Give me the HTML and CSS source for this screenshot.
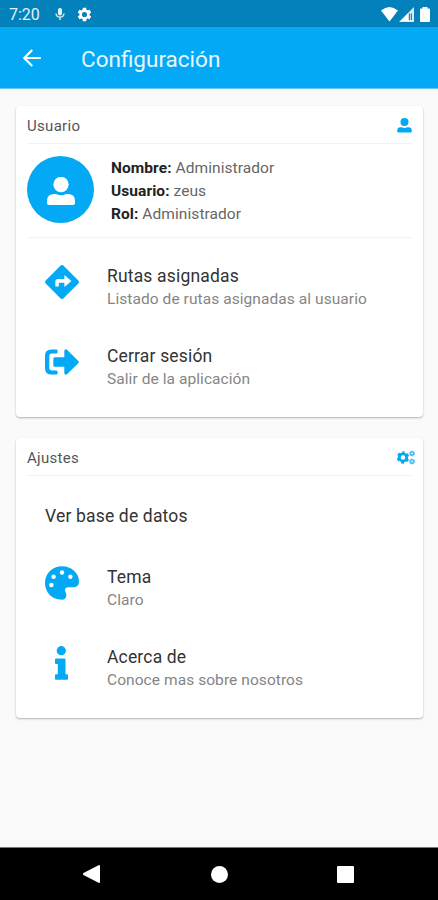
FILE: index.html
```html
<!DOCTYPE html>
<html lang="es">
<head>
<meta charset="utf-8">
<title>Configuración</title>
<link rel="stylesheet" href="styles.css">
</head>
<body>
<div class="status">
  <span class="clock">7:20</span>
  <svg class="mic" width="10" height="14" viewBox="0 0 10 14"><rect x="3" y="1" width="4" height="7.500" rx="2" fill="#e2f1f8"/><path d="M1 6.500c.4 4.700 7.600 4.700 8 0M5 10v3" fill="none" stroke="#c9e5f1" stroke-width="1.500"/></svg>
  <svg class="cog" width="17" height="17" viewBox="0 0 24 24"><path fill="#fff" d="M19.140 12.940c.04-.3.060-.61.060-.94s-.02-.64-.07-.94l2.030-1.580a.49.49 0 0 0 .12-.61l-1.920-3.320a.49.49 0 0 0-.59-.22l-2.390.96c-.5-.38-1.030-.7-1.620-.94L14.400 2.810a.48.48 0 0 0-.48-.41h-3.840a.47.47 0 0 0-.47.41l-.36 2.540c-.59.24-1.130.57-1.620.94l-2.390-.96a.48.48 0 0 0-.59.22L2.740 8.870a.47.47 0 0 0 .12.61l2.030 1.580c-.05.3-.09.63-.09.94s.02.64.07.94l-2.030 1.580a.49.49 0 0 0-.12.61l1.920 3.320c.12.22.37.29.59.22l2.390-.96c.5.38 1.030.7 1.620.94l.36 2.540c.05.24.24.41.48.41h3.840c.24 0 .44-.17.47-.41l.36-2.540c.59-.24 1.130-.56 1.620-.94l2.390.96c.22.080.47 0 .59-.22l1.920-3.320a.47.47 0 0 0-.12-.61zM12 15.600a3.600 3.600 0 1 1 0-7.200 3.600 3.600 0 0 1 0 7.200z"/></svg>
  <span class="spacer"></span>
  <svg class="wifi" width="17" height="15" viewBox="0 0 17 15"><path fill="#fff" d="M0 3.500Q8.500-3.500 17 3.500L8.500 14.500z"/></svg>
  <svg class="signal" width="15" height="15" viewBox="0 0 15 15"><path fill="#d6ebf5" d="M0 15 15 0v15z"/><path fill="#fff" d="M1.500 14 9.500 6v8z"/><path fill="#2b83ae" d="M9.800 6.500h3.200V13H9.800z"/><path fill="#b9dceb" d="M11.100 6h.9v7h-.9z"/></svg>
  <svg width="10" height="15" viewBox="0 0 10 16" preserveAspectRatio="none"><path fill="#fff" d="M2.500 1.500V0h5v1.500H9q1 0 1 1V15q0 1-1 1H1q-1 0-1-1V2.500q0-1 1-1z"/></svg>
</div>
<header class="appbar">
  <svg width="18" height="18" viewBox="0 0 18 18"><path d="M17.800 9H1.800M9.200 1 1.300 9l7.900 8" fill="none" stroke="#fff" stroke-width="2.200"/></svg>
  <h1>Configuración</h1>
</header>
<main>
  <section class="card user">
    <div class="head"><h2>Usuario</h2>
      <svg width="15" height="15" viewBox="0 0 15 15"><circle cx="7.500" cy="4" r="4"/><path d="M3.500 9.300h1.300q2.700 1.400 5.400 0h1.300q3.300 0 3.300 3.400v.6q0 1.200-1.200 1.200H1.400q-1.200 0-1.200-1.200v-.6q0-3.400 3.300-3.400z"/></svg>
    </div>
    <div class="profile">
      <div class="avatar"><svg width="28" height="28" viewBox="0 0 28 28"><circle cx="14" cy="7.500" r="7.700"/><path d="M7 17h2q5 2.500 10 0h2q7 0 7 7v2q0 2-2 2H2q-2 0-2-2v-2q0-7 7-7z"/></svg></div>
      <div class="info">
        <p><b>Nombre:</b> Administrador</p>
        <p><b>Usuario:</b> zeus</p>
        <p><b>Rol:</b> Administrador</p>
      </div>
    </div>
    <div class="row">
      <svg viewBox="0 0 34 34"><path d="M15.400.7q1.600-1.400 3.200 0l14.700 14.700q1.400 1.600 0 3.200L18.600 33.300q-1.600 1.400-3.200 0L.7 18.600q-1.400-1.600 0-3.200z"/><path fill="#fff" d="M10.400 21.500v-5q0-2.600 2.600-2.600h6.400v-4l7 6.100-7 6.100v-4.300h-5.600v3.700z"/></svg>
      <div><h3>Rutas asignadas</h3><p>Listado de rutas asignadas al usuario</p></div>
    </div>
    <div class="row">
      <svg viewBox="0 0 34 34"><path d="M12.500 5.400v2.200q0 1-1 1H7Q4.300 8.600 4.300 11.300v11.400q0 2.700 2.700 2.700h4.500q1 0 1 1v2.200q0 1-1 1h-5Q0 29.600 0 23.200V10.800Q0 4.400 6.500 4.400h5q1 0 1 1z"/><path d="M33.300 18.200 22 29.200q-2.500 1.400-2.700-1.200v-6.200H10q-1.700 0-1.700-1.600v-6.400q0-1.600 1.700-1.600h9.300V6q.2-2.600 2.700-1.200l11.300 11.100q1 1.100 0 2.300z"/></svg>
      <div><h3>Cerrar sesión</h3><p>Salir de la aplicación</p></div>
    </div>
  </section>
  <section class="card settings">
    <div class="head"><h2>Ajustes</h2>
      <svg class="cogs" width="18" height="15" viewBox="0 0 18 15"><circle cx="6" cy="7.500" r="3.700" fill="none" stroke="#03a9f4" stroke-width="2.800"/><circle cx="6" cy="7.500" r="5.300" fill="none" stroke="#03a9f4" stroke-width="1.800" stroke-dasharray="3 2.550" stroke-dashoffset="1.500" transform="rotate(-90 6 7.500)"/><g fill="none" stroke="#5fbdf0"><circle cx="15" cy="3.500" r="1.700" stroke-width="1.800"/><circle cx="15" cy="3.500" r="2.600" stroke-width="1" stroke-dasharray="1.360"/><circle cx="15" cy="11.500" r="1.700" stroke-width="1.800"/><circle cx="15" cy="11.500" r="2.600" stroke-width="1" stroke-dasharray="1.360"/></g></svg>
    </div>
    <div class="single"><h3>Ver base de datos</h3></div>
    <div class="row">
      <svg viewBox="0 0 34 34"><path d="M17 .3C26.500.3 34 7 34 15.500q0 5.500-5.500 5.700h-5.200q-3.300.2-3.300 3 0 1 .7 2.300 1 2 .4 4-.8 3.200-4.100 3.200C7 33.700 0 26.500 0 17S7.500.3 17 .3z"/><g fill="#fff"><circle cx="6.400" cy="19" r="2.200"/><circle cx="8.600" cy="10.800" r="2.200"/><circle cx="17" cy="6.500" r="2.200"/><circle cx="25.400" cy="10.800" r="2.200"/></g></svg>
      <div><h3>Tema</h3><p>Claro</p></div>
    </div>
    <div class="row">
      <svg viewBox="0 0 34 34"><circle cx="16.300" cy="4.700" r="4.600"/><path d="M11 12.500h8.500q1 0 1 1v14.800H22q1 0 1 1v3.500q0 1-1 1H11q-1 0-1-1v-3.500q0-1 1-1h1.800V18H11q-1 0-1-1v-3.500q0-1 1-1z"/></svg>
      <div><h3>Acerca de</h3><p>Conoce mas sobre nosotros</p></div>
    </div>
  </section>
</main>
<nav>
  <svg width="17" height="18" viewBox="0 0 17 18"><path fill="#fff" d="M16 0q1 0 1 1v16q0 1-1 1L.5 10q-1-1 0-2z"/></svg>
  <i class="home"></i>
  <i class="recent"></i>
</nav>
</body>
</html>
```
FILE: styles.css
```css
* { box-sizing: border-box; margin: 0; padding: 0; }
body { width: 438px; height: 900px; display: flex; flex-direction: column; background: #fafafa; font-family: Roboto, sans-serif; overflow: hidden; }
svg { display: block; flex: none; fill: #03a9f4; }
.status { height: 27px; background: #0281ba; display: flex; align-items: center; padding: 1px 8px 0 9px; }
.clock { color: #e4f2f9; font-size: 16px; width: 46px; }
.cog { margin-left: 11px; }
.spacer { flex: 1; }
.signal { margin: 0 6px 0 1px; }
.appbar { height: 62px; background: #03a9f4; display: flex; align-items: center; padding: 1px 23px 0; border-bottom: 1px solid #65c4f3; }
.appbar h1 { margin-left: 40px; padding-top: 1px; color: #e9f6fd; font-size: 22.500px; font-weight: 400; line-height: 28px; }
main { flex: 1; padding: 17px 16px 0; display: flex; flex-direction: column; gap: 21px; }
.card { width: 407px; background: #fff; border-radius: 4px; box-shadow: 0 1px 2px rgba(0,0,0,.3); padding: 0 11px; }
.user { height: 311px; }
.settings { height: 280px; }
.head { height: 38px; border-bottom: 1px solid #f3f3f3; display: flex; align-items: center; justify-content: space-between; padding: 2px 0 0; }
.head h2 { font-size: 15px; line-height: 20px; font-weight: 400; color: #555; letter-spacing: .3px; }
.cogs { margin-right: -3px; }
.profile { height: 94px; border-bottom: 1px solid #f3f3f3; display: flex; align-items: center; padding-bottom: 2px; }
.avatar { width: 67px; height: 67px; border-radius: 50%; background: #03a9f4; display: flex; align-items: center; justify-content: center; }
.avatar svg { fill: #fff; margin-top: 2px; }
.info { margin-left: 17px; padding-top: 3px; }
.info p { font-size: 15.500px; line-height: 23px; color: #666; letter-spacing: .07px; }
.info b { color: #222; font-weight: 700; }
.row { height: 80px; display: flex; padding: 15px 0 0 18px; }
.profile + .row { margin-top: 11px; }
.row > svg { width: 34px; height: 34px; margin-top: 1px; }
.row > div { margin-left: 28px; }
h3 { font-size: 17.500px; font-weight: 400; color: #333; line-height: 24px; letter-spacing: .17px; }
.row p { font-size: 15.500px; line-height: 23px; color: #858585; letter-spacing: .07px; }
.single { height: 74px; padding: 28px 0 0 18px; }
nav { height: 53px; background: #000; border-top: 1px solid #777; display: flex; align-items: center; padding: 0 84px 0 83px; justify-content: space-between; }
.home { width: 17px; height: 17px; margin-left: 1px; border-radius: 50%; background: #fff; }
.recent { width: 17px; height: 17px; border-radius: 1px; background: #fff; }
```
